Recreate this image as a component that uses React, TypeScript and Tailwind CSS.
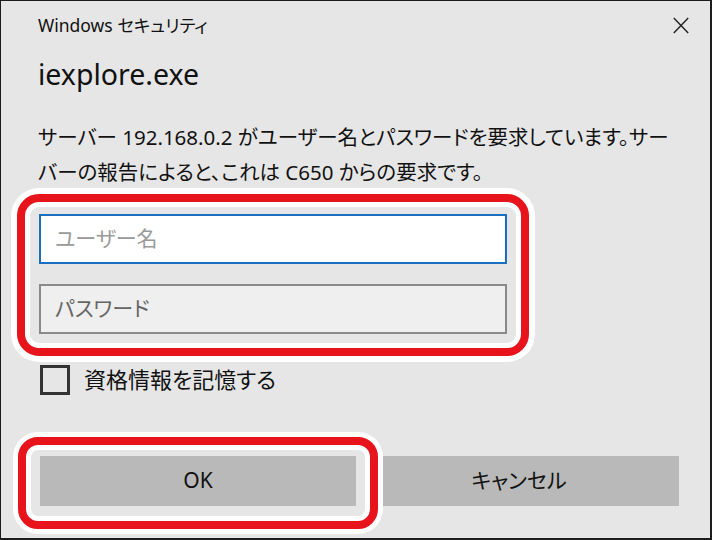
const font = "font-['Noto_Sans','Noto_Sans_CJK_JP',sans-serif] [font-feature-settings:'palt']";

function CloseIcon() {
  return (
    <svg width="16" height="17" viewBox="0 0 16 17" fill="none" stroke="#222" strokeWidth="1.4">
      <path d="M0.8 1 L15.2 16 M15.2 1 L0.8 16" />
    </svg>
  );
}

export default function App() {
  return (
    <div
      className={`flex h-[540px] w-[712px] flex-col border-t border-l border-r-2 border-b-2 border-[#1c1c1c] bg-[#e6e6e6] pl-[37px] text-[#111] ${font}`}
    >
      {/* title bar */}
      <div className="mt-[13px] flex items-center justify-between pr-[21px]">
        <span className="text-[17.5px] leading-[22px]">Windows セキュリティ</span>
        <CloseIcon />
      </div>

      <div className="mt-[20px] text-[28.5px] leading-[36px]">iexplore.exe</div>

      <p className="mt-[28px] text-[20.5px] leading-[35px]">
        サーバー 192.168.0.2 がユーザー名とパスワードを要求しています。サー
        <br />
        バーの報告によると、これは C650 からの要求です。
      </p>

      {/* credentials (highlighted) */}
      <div className="mt-[4px] -ml-[21px] w-[512px] rounded-[22px] border-[8px] border-[#e8141b] px-[14px] pt-[12px] pb-[14px] shadow-[inset_0_0_0_5px_#fff,0_0_0_6px_#fff]">
        <div className="flex h-[50px] items-center border-2 border-[#1a6fc0] bg-white pl-[14px] text-[21px] text-[#9a9a9a]">
          ユーザー名
        </div>
        <div className="mt-[20px] flex h-[50px] items-center border-2 border-[#8a8a8a] bg-[#efefef] pl-[14px] text-[21px] text-[#666]">
          パスワード
        </div>
      </div>

      <label className="mt-[7px] flex items-center gap-[14px]">
        <span className="ml-[2px] h-[30px] w-[30px] border-[3px] border-[#333]" />
        <span className="text-[22px]">資格情報を記憶する</span>
      </label>

      {/* buttons */}
      <div className="mt-[41px] flex items-start">
        <div className="-ml-[20px] w-[360px] rounded-[20px] border-[8px] border-[#e8141b] px-[14px] pt-[11px] pb-[15px] shadow-[inset_0_0_0_5px_#fff,0_0_0_5px_#fff]">
          <button className="flex h-[50px] w-full items-center justify-center bg-[#b8b9b8] text-[21px]">
            OK
          </button>
        </div>
        <button className="mt-[19px] ml-[5px] flex h-[50px] w-[296px] items-center justify-center bg-[#b8b9b8] pr-[24px] text-[21px]">
          キャンセル
        </button>
      </div>
    </div>
  );
}
